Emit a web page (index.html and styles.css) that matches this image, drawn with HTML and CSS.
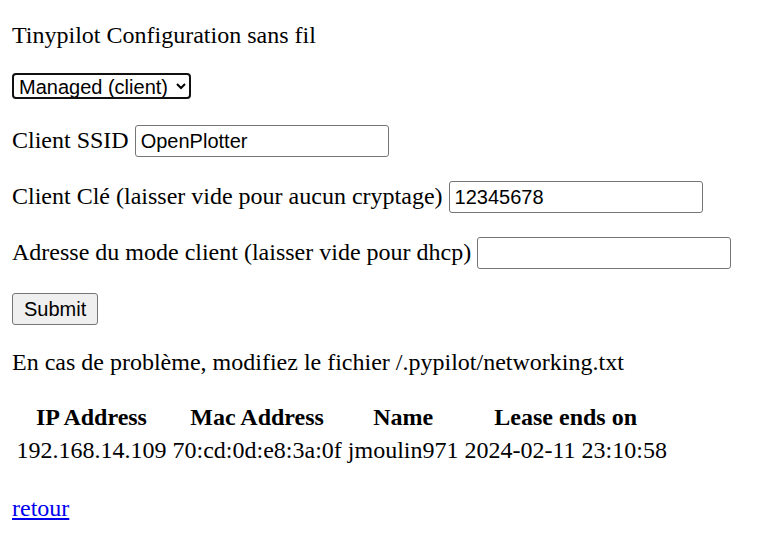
FILE: index.html
```html
<!DOCTYPE html>
<html lang="fr">
<head>
<meta charset="utf-8">
<title>Tinypilot Configuration sans fil</title>
<link rel="stylesheet" href="styles.css">
</head>
<body>
<p class="title">Tinypilot Configuration sans fil</p>
<form class="wifi-form">
  <p class="row">
    <select class="mode-select">
      <option>Managed (client)</option>
      <option>Access Point</option>
    </select>
  </p>
  <p class="row">Client SSID <input class="field" type="text" value="OpenPlotter"></p>
  <p class="row">Client Clé (laisser vide pour aucun cryptage) <input class="field" type="text" value="12345678"></p>
  <p class="row">Adresse du mode client (laisser vide pour dhcp) <input class="field" type="text" value=""></p>
  <p class="row"><input class="submit" type="submit" value="Submit"></p>
</form>
<p class="note">En cas de problème, modifiez le fichier /.pypilot/networking.txt</p>
<table class="leases">
  <tr><th>IP Address</th><th>Mac Address</th><th>Name</th><th>Lease ends on</th></tr>
  <tr><td>192.168.14.109</td><td>70:cd:0d:e8:3a:0f</td><td>jmoulin971</td><td>2024-02-11 23:10:58</td></tr>
</table>
<p class="back"><a href="#">retour</a></p>
</body>
</html>
```
FILE: styles.css
```css
html, body {
  background: #ffffff;
}
body {
  margin: 12px;
  font-family: "Liberation Sans", Arial, sans-serif;
  font-family: "Liberation Serif", "Times New Roman", serif;
  font-size: 24px;
  color: #000000;
}
p {
  margin: 24px 0;
}
.title {
  margin-top: 10px;
}
.wifi-form .row:first-child {
  margin-bottom: 23px;
}
.mode-select {
  font-family: "Liberation Sans", Arial, sans-serif;
  font-size: 20px;
  height: 26px;
  padding: 0 5px 0 1px;
  border: 2px solid #101010;
  border-radius: 4px;
  background: #ffffff;
  color: #000000;
  vertical-align: 1px;
}
.field {
  font-family: "Liberation Sans", Arial, sans-serif;
  font-size: 20px;
  width: 254px;
  height: 32px;
  box-sizing: border-box;
  padding: 1px 5px;
  border: 1px solid #767676;
  border-radius: 3px;
  color: #000000;
  vertical-align: baseline;
}
.submit {
  font-family: "Liberation Sans", Arial, sans-serif;
  font-size: 20px;
  height: 32px;
  padding: 1px 11px;
  border: 1px solid #767676;
  border-radius: 3px;
  background: #efefef;
  color: #000000;
}
.leases {
  border-spacing: 3px;
  margin-top: -1px;
}
.leases th,
.leases td {
  padding: 1.5px;
  text-align: center;
}
.leases th {
  font-weight: bold;
}
.back {
  margin-top: 27px;
}
.back a {
  color: #0000ee;
  text-decoration: underline;
}
```
